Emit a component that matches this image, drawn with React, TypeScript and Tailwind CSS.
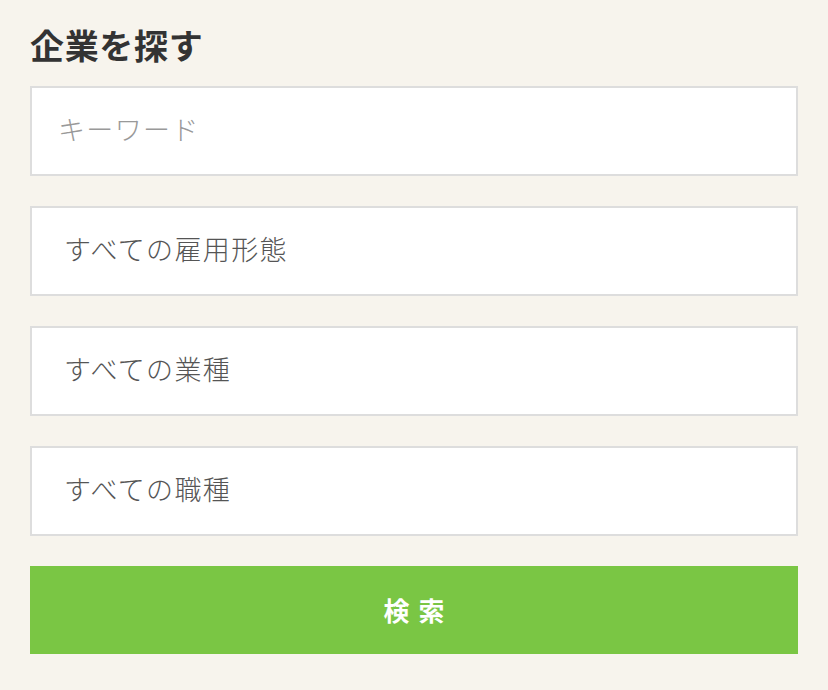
import React from 'react';

const fieldClass =
  'h-[90px] w-full border-2 border-[#dddddd] bg-white flex items-center pb-[5px] text-[27px] font-light leading-none tracking-[0.05em]';

const SelectField: React.FC<{ label: string }> = ({ label }) => (
  <div className={`${fieldClass} pl-[32px] text-[#555555]`}>
    <span>{label}</span>
  </div>
);

export default function App() {
  return (
    <div
      className="min-h-[690px] w-full bg-[#f7f4ed] px-[30px] pt-[23px] pb-[36px]"
      style={{ fontFamily: '"Noto Sans CJK JP", "Noto Sans", sans-serif' }}
    >
      <h2 className="text-[34px] font-bold leading-[44px] text-[#333333] tracking-[0.02em]">企業を探す</h2>
      <div className="mt-[19px] flex flex-col gap-[30px]">
        <div className={`${fieldClass} pl-[26px] text-[#999999]`}>
          <span>キーワード</span>
        </div>
        <SelectField label="すべての雇用形態" />
        <SelectField label="すべての業種" />
        <SelectField label="すべての職種" />
        <button className="h-[88px] w-full bg-[#7ac644] text-white text-[26px] font-bold tracking-[0.35em] pl-[0.35em] leading-none">
          検索
        </button>
      </div>
    </div>
  );
}
